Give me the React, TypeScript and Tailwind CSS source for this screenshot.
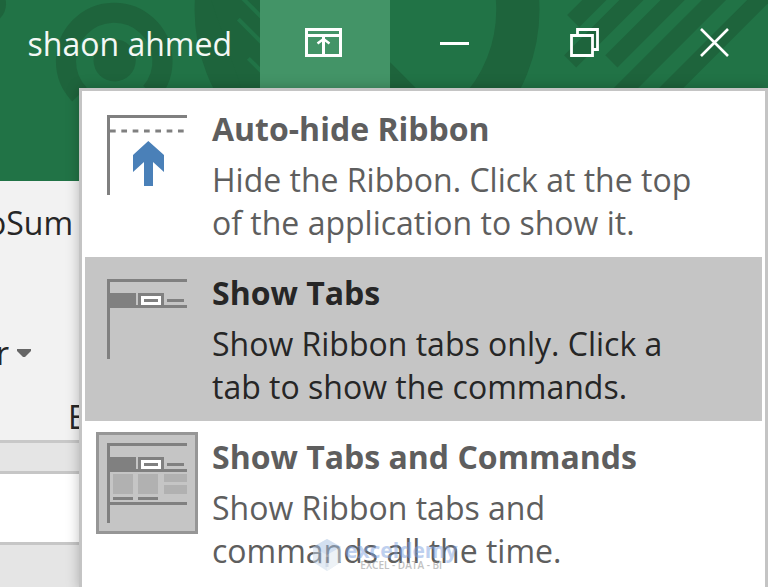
import type { ReactNode } from "react";

function HeaderArt() {
  return (
    <svg className="absolute inset-0 h-full w-full" viewBox="0 0 768 180" preserveAspectRatio="xMinYMin slice" aria-hidden="true">
      <g fill="none" stroke="#1e643c">
        <path d="M79 94A48 48 0 1 1 150 92" strokeWidth="20" />
        <circle cx="365" cy="10" r="150" strokeWidth="43" />
        <g strokeWidth="17">
          <path d="M570 21L601 -10" />
          <path d="M567 61L638 -10" />
          <path d="M608 61L679 -10" />
          <path d="M600 110L720 -10" />
          <path d="M645 110L765 -10" />
        </g>
      </g>
      <circle cx="114" cy="60" r="21" fill="#1e643c" />
      <circle cx="-14" cy="4" r="20" fill="#1e643c" />
      <path d="M210 0H260V88H240Z" fill="#1e643c" />
      <path d="M388 62L416 90H388Z" fill="#1e643c" />
      <g stroke="#217346" strokeWidth="4">
        <path d="M239 -4L264 21" />
        <path d="M237 19L264 46" />
        <path d="M247 58L264 75" />
      </g>
    </svg>
  );
}

function WindowButton({ label, active, children }: { label: string; active?: boolean; children: ReactNode }) {
  return (
    <button
      aria-label={label}
      className={`flex h-[88px] w-[130px] shrink-0 items-center justify-center pb-[3px] ${active ? "bg-[#439467]" : ""}`}
    >
      {children}
    </button>
  );
}

function Header() {
  return (
    <header className="relative h-[181px] overflow-hidden bg-[#217346]">
      <HeaderArt />
      <div className="relative -mr-3 flex items-center justify-end">
        <span className="mr-7 whitespace-nowrap text-[32px] leading-[44px] text-[#f3f8f5]">shaon ahmed</span>
        <WindowButton label="Ribbon Display Options" active>
          <svg width="40" height="30" viewBox="0 0 40 30" fill="none" stroke="#fff" strokeWidth="3">
            <path d="M1.500 1.500H35.500V27.500H1.500ZM1.500 7.500H35.500M18.500 8V27" />
            <path d="M12.500 15.500L18.500 11L24.500 15.500" strokeWidth="2.500" />
          </svg>
        </WindowButton>
        <WindowButton label="Minimize">
          <svg width="30" height="30" viewBox="0 0 30 30">
            <path d="M0 15.500H29" stroke="#fff" strokeWidth="3" />
          </svg>
        </WindowButton>
        <WindowButton label="Restore Down">
          <svg width="30" height="30" viewBox="0 0 30 30" fill="none" stroke="#fff" strokeWidth="2.800">
            <path d="M1.500 7.500H22.500V27.500H1.500ZM7.500 7V1.500H27.500V21.500H23" />
          </svg>
        </WindowButton>
        <WindowButton label="Close">
          <svg width="30" height="30" viewBox="0 0 30 30" fill="none" stroke="#fff" strokeWidth="2.600">
            <path d="M1 1L28 28M28 1L1 28" />
          </svg>
        </WindowButton>
      </div>
    </header>
  );
}

// Left part of the worksheet window that stays visible beside the menu
function Ribbon() {
  return (
    <main className="flex flex-1 flex-col bg-[#e5e5e5] text-[#262626]">
      <div className="flex h-[262px] flex-col border-b-3 border-[#c8c8c8] bg-[#f2f2f2] pt-5">
        <div className="flex w-[73px] justify-end overflow-hidden text-[32px] leading-[44px]">oSum</div>
        <div className="flex items-center gap-2 pt-[86px] text-[32px] leading-[44px]">
          <span className="flex w-[9px] justify-end overflow-hidden">r</span>
          <svg width="14" height="8" viewBox="0 0 14 8" aria-hidden="true">
            <path d="M0 0H14V2L8 8H6L0 2Z" fill="#666" />
          </svg>
        </div>
        <div className="mt-5 pl-[68px] text-[32px] leading-[44px]">E</div>
      </div>
      <div className="mt-7 h-[74px] border-y-3 border-[#c6c6c6] bg-white" />
    </main>
  );
}

function TabStrip() {
  return (
    <>
      <path d="M14 25H40V37H91V40H14Z" fill="#808080" />
      <path d="M42 25H68V38H42Z" fill="#808080" />
      <path d="M45 28H65V37H45Z" fill="#fff" />
      <path d="M48 31H62V34H48ZM71 31H88V34H71Z" fill="#808080" />
    </>
  );
}

function AutoHideIcon() {
  return (
    <>
      <path d="M14 27H88" stroke="#808080" strokeWidth="3" strokeDasharray="5.700 5.630" />
      <path d="M52.300 37L68 51V68L57 58V82H48V58L37 68V51Z" fill="#4a80b8" />
    </>
  );
}

function CommandsIcon() {
  return (
    <>
      <TabStrip />
      <path d="M17 42H37V62H17ZM42 42H62V62H42ZM68 42H91V50H68ZM68 53H91V62H68Z" fill="#b1b1b1" />
      <path d="M17 65H37V68H17ZM42 65H62V68H42ZM14 70H91V73H14Z" fill="#808080" />
    </>
  );
}

const options = [
  {
    title: "Auto-hide Ribbon",
    lines: ["Hide the Ribbon. Click at the top", "of the application to show it."],
    icon: <AutoHideIcon />,
  },
  {
    title: "Show Tabs",
    lines: ["Show Ribbon tabs only. Click a", "tab to show the commands."],
    icon: <TabStrip />,
    hovered: true,
  },
  {
    title: "Show Tabs and Commands",
    lines: ["Show Ribbon tabs and", "commands all the time."],
    icon: <CommandsIcon />,
    selected: true,
  },
];

function Watermark() {
  return (
    <div className="pointer-events-none absolute top-[118px] left-[228px] flex items-center gap-1 opacity-50">
      <svg width="28" height="32" viewBox="0 0 28 32" aria-hidden="true">
        <path d="M14 0L28 8V23L14 32L0 23V8Z" fill="#c9d9ea" />
        <path d="M14 0L28 8L14 16L0 8Z" fill="#a9c3e4" />
        <path d="M14 16L28 8V23L14 32Z" fill="#dde6ee" />
        <path d="M7 14V25M14 18V28" stroke="#a3b7d0" strokeWidth="3" />
      </svg>
      <div className="flex flex-col items-center">
        <span className="text-[21px] leading-5 font-bold text-[#7fa2e0]">exceldemy</span>
        <span className="text-[10px] leading-[10px] font-semibold text-[#858585]">EXCEL - DATA - BI</span>
      </div>
    </div>
  );
}

function RibbonMenu() {
  return (
    <div
      role="menu"
      className="absolute top-[88px] right-0 left-[79px] border-3 border-[#c4c4c4] bg-white px-[3px] py-[2px] shadow-[0_0_12px_rgba(0,0,0,0.25)]"
    >
      {options.map((option) => (
        <button
          key={option.title}
          role="menuitem"
          className={`relative flex h-[164px] w-full items-start gap-[14px] pl-[11px] text-left ${
            option.hovered ? "bg-[#c5c5c5] text-[#262626]" : "text-[#5e5e5e]"
          }`}
        >
          <svg width="102" height="102" viewBox="0 0 102 102" aria-hidden="true" className="mt-[11px] shrink-0">
            {option.selected && (
              <rect x="1.500" y="1.500" width="99" height="99" fill="#c5c5c5" stroke="#969696" strokeWidth="3" />
            )}
            <path d="M11 11H91V14H14V91H11Z" fill="#808080" />
            {option.icon}
          </svg>
          <span className="flex flex-col pt-[14px] whitespace-nowrap text-[32px] leading-[43px]">
            <strong className="mb-2 font-bold">{option.title}</strong>
            {option.lines.map((line) => (
              <span key={line}>{line}</span>
            ))}
          </span>
          {option.selected && <Watermark />}
        </button>
      ))}
    </div>
  );
}

function App() {
  return (
    <div className="relative flex h-screen flex-col overflow-hidden font-['Open_Sans',sans-serif]">
      <Header />
      <Ribbon />
      <RibbonMenu />
    </div>
  );
}

export default App;
